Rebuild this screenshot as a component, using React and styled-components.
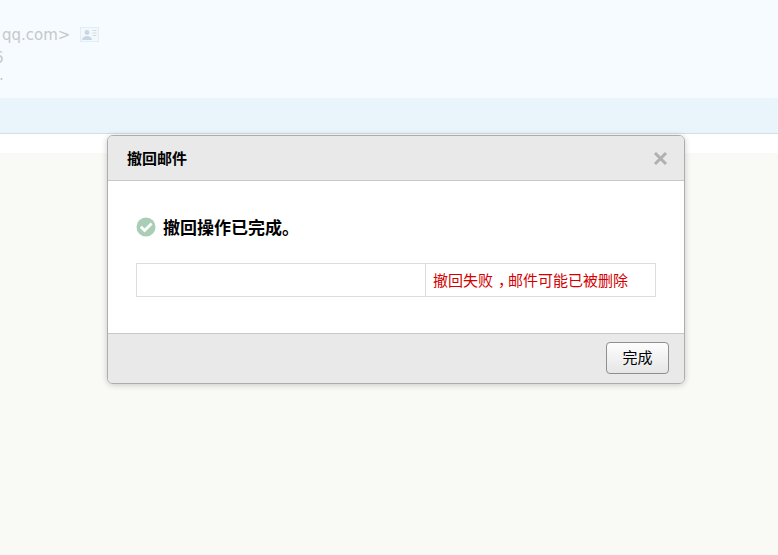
import React from "react";
import styled, { createGlobalStyle } from "styled-components";

const Global = createGlobalStyle`
  html, body { margin: 0; padding: 0; height: 100%; }
  body { background: #f9faf5; font-family: "Liberation Sans", "Noto Sans CJK SC", sans-serif; overflow: hidden; }
`;

const Page = styled.div`
  position: relative;
  width: 778px;
  height: 555px;
  overflow: hidden;
  display: flex;
  flex-direction: column;
`;

const MailHead = styled.div`
  height: 98px;
  box-sizing: border-box;
  padding-top: 23px;
  background: #f5fbfe;
  color: #c6c8ca;
  font-family: "DejaVu Sans", sans-serif;
  font-size: 15px;
  overflow: hidden;
`;

const HeadLine = styled.div`
  height: ${(p) => p.$height || 23}px;
  display: flex;
  align-items: center;
  gap: 10px;
  margin-left: ${(p) => p.$shift}px;
  white-space: nowrap;
`;

const ActionBar = styled.div`
  height: 35px;
  background: #e9f5fb;
  border-bottom: 1px solid #d4dfe8;
`;

const WhiteStrip = styled.div`
  height: 19px;
  background: #fff;
`;

const Rest = styled.div`
  flex: 1;
  background: #f9faf5;
`;

const Dialog = styled.div`
  position: absolute;
  left: 107px;
  top: 135px;
  width: 578px;
  height: 249px;
  box-sizing: border-box;
  border: 1px solid #adadad;
  border-radius: 6px;
  box-shadow: 0 1px 6px rgba(0, 0, 0, 0.2);
  background: #fff;
  overflow: hidden;
  display: flex;
  flex-direction: column;
`;

const DialogHeader = styled.div`
  height: 45px;
  box-sizing: border-box;
  flex: none;
  border-bottom: 1px solid #c8c8c8;
  background: #e9e9e9;
  display: flex;
  align-items: center;
  justify-content: space-between;
  padding: 0 16px 2px 19px;
`;

const DialogTitle = styled.div`
  font-size: 15px;
  font-weight: 700;
  color: #000;
`;

const CloseButton = styled.button`
  border: 0;
  padding: 0;
  background: none;
  display: flex;
  width: 15px;
  height: 15px;
  margin-top: 2px;
`;

const DialogBody = styled.div`
  flex: 1;
  padding: 32px 28px 0;
`;

const StatusRow = styled.div`
  display: flex;
  align-items: center;
  gap: 7px;
  height: 28px;
`;

const StatusText = styled.div`
  font-size: 17px;
  font-weight: 700;
  color: #000;
  margin-top: -2px;
`;

const ResultTable = styled.div`
  margin-top: 22px;
  width: 520px;
  height: 34px;
  box-sizing: border-box;
  border: 1px solid #dcdcdc;
  display: grid;
  grid-template-columns: 288px 1fr;
`;

const ResultCell = styled.div`
  display: flex;
  align-items: center;
  padding: 0 0 2px 7px;
  font-size: 15px;
  color: #d40000;
  white-space: pre;
  border-left: ${(p) => (p.$divided ? "1px solid #dcdcdc" : "0")};
`;

const CenteredComma = styled.span`
  display: inline-block;
  transform: translateX(5px);
`;

const DialogFooter = styled.div`
  height: 50px;
  box-sizing: border-box;
  flex: none;
  border-top: 1px solid #c8c8c8;
  background: #e9e9e9;
  display: flex;
  align-items: center;
  justify-content: flex-end;
  padding: 0 15px 1px 0;
`;

const DoneButton = styled.button`
  width: 63px;
  height: 32px;
  border: 1px solid #8f8f8f;
  border-radius: 4px;
  background: linear-gradient(#fdfdfd, #e6e6e6);
  font-family: inherit;
  font-size: 15px;
  color: #000;
  padding: 0 0 3px;
`;

const CardIcon = () => (
  <svg width="19" height="15" viewBox="0 0 19 15">
    <rect x="0" y="0" width="19" height="15" fill="#e3edf5" />
    <rect x="1" y="1" width="17" height="13" fill="#f3f8fb" />
    <circle cx="7" cy="5.500" r="2.400" fill="#c6d6e6" />
    <path d="M2 13c.4-3 2.400-4 5-4s4.600 1 5 4z" fill="#c6d6e6" />
    <path d="M12.500 3.500h4M12.500 6h4M12.500 8.500h4" stroke="#cfdbe6" strokeWidth="1" />
  </svg>
);

const CheckIcon = () => (
  <svg width="20" height="20" viewBox="0 0 20 20">
    <circle cx="10" cy="10" r="9.500" fill="#a9cdb5" />
    <path d="M4.800 9.800l3.800 3.800L15.600 6.600" fill="none" stroke="#fff" strokeWidth="2.800" />
  </svg>
);

const CloseIcon = () => (
  <svg width="15" height="15" viewBox="0 0 15 15">
    <path d="M2 2l11 11M13 2L2 13" stroke="#b0b0b0" strokeWidth="3" />
  </svg>
);

export default function App() {
  return (
    <Page>
      <Global />
      <MailHead>
        <HeadLine $shift={2}>
          <span>qq.com&gt;</span>
          <CardIcon />
        </HeadLine>
        <HeadLine $shift={-6}>6</HeadLine>
        <HeadLine $shift={-1} $height={12}>.</HeadLine>
      </MailHead>
      <ActionBar />
      <WhiteStrip />
      <Rest />
      <Dialog>
        <DialogHeader>
          <DialogTitle>撤回邮件</DialogTitle>
          <CloseButton>
            <CloseIcon />
          </CloseButton>
        </DialogHeader>
        <DialogBody>
          <StatusRow>
            <CheckIcon />
            <StatusText>撤回操作已完成。</StatusText>
          </StatusRow>
          <ResultTable>
            <ResultCell />
            <ResultCell $divided>
              撤回失败<CenteredComma>，</CenteredComma>邮件可能已被删除
            </ResultCell>
          </ResultTable>
        </DialogBody>
        <DialogFooter>
          <DoneButton>完成</DoneButton>
        </DialogFooter>
      </Dialog>
    </Page>
  );
}
